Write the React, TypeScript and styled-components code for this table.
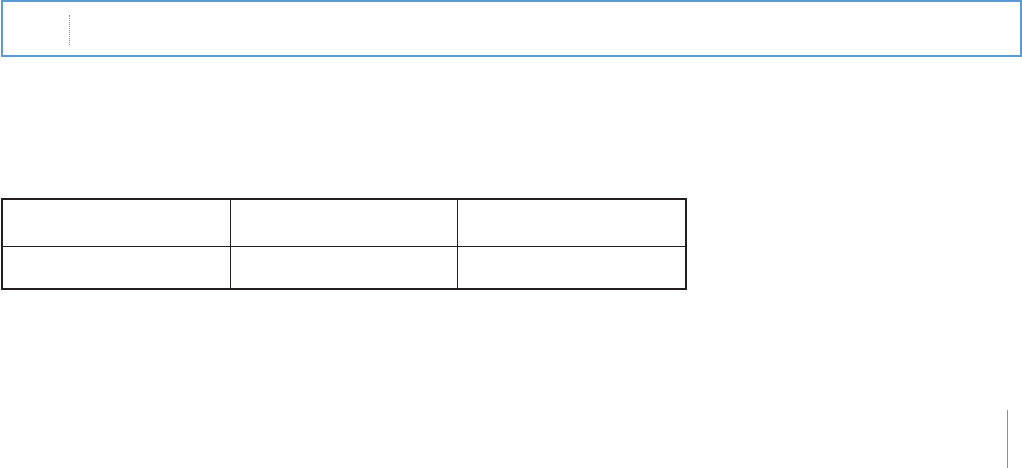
import React, { FC } from 'react';

import styled, { createGlobalStyle } from 'styled-components';

const GlobalStyle = createGlobalStyle`
  html, body {
    margin: 0;
    padding: 0;
    background: #ffffff;
    font-family: 'Liberation Sans', Arial, sans-serif;
  }
`;

const Page = styled.div`
  width: 1022px;
  height: 468px;
  overflow: hidden;
  display: flex;
  flex-direction: column;
  align-items: flex-start;
`;

const HeaderBox = styled.div`
  box-sizing: border-box;
  margin-left: 1px;
  width: 1021px;
  height: 57px;
  border: 2px solid #5b9bd5;
  padding: 13px 0 0 66px;
`;

const DottedRule = styled.div`
  width: 0;
  height: 30px;
  border-left: 1px dotted #5b9bd5;
`;

const Table = styled.table`
  box-sizing: border-box;
  width: 686px;
  margin: 141px 0 0 1px;
  border-collapse: separate;
  border-spacing: 0;
  border: 2px solid #231f20;
  table-layout: fixed;
`;

const Cell = styled.td<{ $width: number; $height: number; $last: boolean; $bottom: boolean }>`
  box-sizing: border-box;
  width: ${(p) => p.$width}px;
  height: ${(p) => p.$height}px;
  padding: 0;
  border-right: ${(p) => (p.$last ? 'none' : '1px solid #231f20')};
  border-bottom: ${(p) => (p.$bottom ? 'none' : '1px solid #231f20')};
`;

const Footer = styled.div`
  align-self: stretch;
  display: flex;
  justify-content: flex-end;
  padding-right: 14px;
  margin-top: 120px;
`;

const CaretLine = styled.div`
  width: 1px;
  height: 58px;
  background: #5b9bd5;
`;

const columns = [228, 227, 227];
const rows = [47, 41];

const App: FC = () => {
  return (
    <>
      <GlobalStyle />
      <Page>
        <HeaderBox>
          <DottedRule />
        </HeaderBox>
        <Table>
          <tbody>
            {rows.map((h, r) => (
              // eslint-disable-next-line react/no-array-index-key
              <tr key={r}>
                {columns.map((w, c) => (
                  <Cell
                    // eslint-disable-next-line react/no-array-index-key
                    key={c}
                    $width={w}
                    $height={h}
                    $last={c === columns.length - 1}
                    $bottom={r === rows.length - 1}
                  />
                ))}
              </tr>
            ))}
          </tbody>
        </Table>
        <Footer>
          <CaretLine />
        </Footer>
      </Page>
    </>
  );
};

export default App;
